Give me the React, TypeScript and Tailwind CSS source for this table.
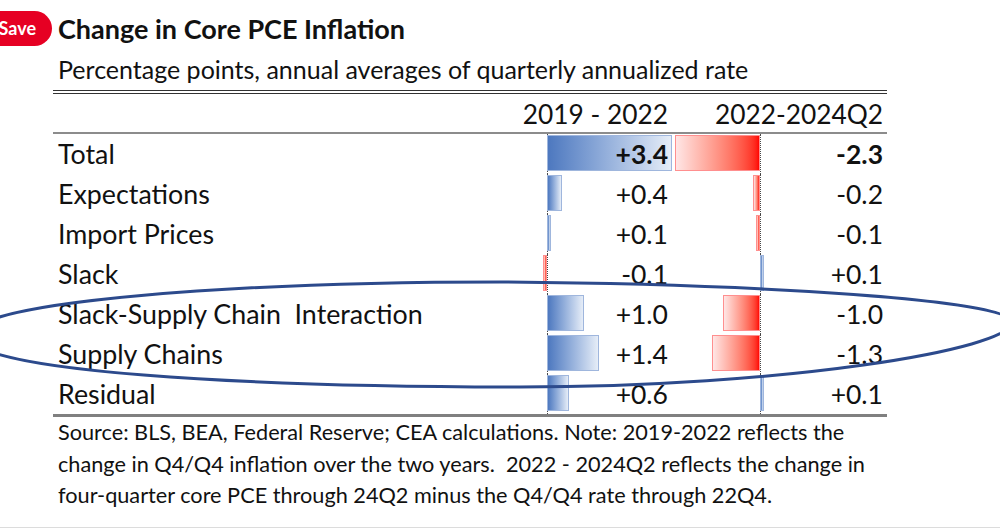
import React from "react";

const rows = [
  { label: "Total", a: 3.4, b: -2.3, bold: true },
  { label: "Expectations", a: 0.4, b: -0.2 },
  { label: "Import Prices", a: 0.1, b: -0.1 },
  { label: "Slack", a: -0.1, b: 0.1 },
  { label: "Slack-Supply Chain  Interaction", a: 1.0, b: -1.0 },
  { label: "Supply Chains", a: 1.4, b: -1.3 },
  { label: "Residual", a: 0.6, b: 0.1 },
];

const SCALE = 36.8;

function fmt(v: number) {
  return (v > 0 ? "+" : "") + v.toFixed(1);
}

function Bar({ value, axis }: { value: number; axis: number }) {
  const w = Math.abs(value) * SCALE;
  const pos = value >= 0;
  return (
    <div
      className={
        pos
          ? "absolute top-[1px] bottom-[3px] border border-[#9fb6dd] bg-linear-to-r from-[#4d78bf] to-[#e6edf7]"
          : "absolute top-[1px] bottom-[3px] border border-[#ff8f8f] bg-linear-to-l from-[#ff0000] to-[#ffe6e6]"
      }
      style={{ left: pos ? axis : axis - w, width: w }}
    />
  );
}

function Cell({ value, axis, bold }: { value: number; axis: number; bold?: boolean }) {
  return (
    <div className="relative h-10 flex items-center justify-end pr-1">
      <div
        className="absolute top-0 bottom-0 border-l border-dotted border-[#4a4a4a]"
        style={{ left: axis }}
      />
      <Bar value={value} axis={axis} />
      <span className={bold ? "relative font-bold whitespace-nowrap" : "relative whitespace-nowrap"}>
        {fmt(value)}
      </span>
    </div>
  );
}

export default function App() {
  return (
    <div className="relative w-[1000px] h-[532px] overflow-hidden bg-white text-[#111] font-['Lato',sans-serif]">
      {/* Pinterest save button */}
      <div className="absolute left-[-24px] top-[11px] h-[35px] w-[76px] rounded-full bg-[#e60023] text-white text-[18px] font-bold flex items-center justify-end pr-[16px]">
        Save
      </div>

      <div className="pt-[13px] pl-[58px] text-[27px] font-bold leading-8">
        Change in Core PCE Inflation
      </div>

      <div className="ml-[53px] w-[834px]">
        <div className="pl-[5px] pt-[9px] pb-[6px] text-[25px] leading-[30px] border-b-4 border-double border-[#333]">
          Percentage points, annual averages of quarterly annualized rate
        </div>

        <div className="grid grid-cols-[490px_129px_215px] text-[26.3px] leading-[30px] border-b-2 border-[#8c8c8c] h-[40px] items-end pb-[3px]">
          <div />
          <div className="flex justify-end pr-1 whitespace-nowrap">2019 - 2022</div>
          <div className="flex justify-end pr-1 whitespace-nowrap">2022-2024Q2</div>
        </div>

        <div className="border-b-[3px] border-[#808080] text-[26.5px] leading-[30px]">
          {rows.map((r) => (
            <div key={r.label} className="grid grid-cols-[490px_129px_215px]">
              <div className="h-10 flex items-center pl-[5px] whitespace-pre text-[26.8px]">{r.label}</div>
              <Cell value={r.a} axis={4} bold={r.bold} />
              <Cell value={r.b} axis={88} bold={r.bold} />
            </div>
          ))}
        </div>

        <div className="pl-[5px] text-[21.7px] leading-[31.5px] whitespace-pre">
          <div>Source: BLS, BEA, Federal Reserve; CEA calculations. Note: 2019-2022 reflects the</div>
          <div>change in Q4/Q4 inflation over the two years.  2022 - 2024Q2 reflects the change in</div>
          <div>four-quarter core PCE through 24Q2 minus the Q4/Q4 rate through 22Q4.</div>
        </div>
      </div>

      <div className="mt-[15px] border-t border-[#dcdcdc]" />

      {/* hand-drawn highlight ring */}
      <svg
        className="absolute inset-0 pointer-events-none"
        width="1000"
        height="532"
        viewBox="0 0 1000 532"
      >
        <path
          d="M -30 336 C -30 300, 250 282, 500 282 C 760 284, 1012 300, 1012 322 C 1012 350, 780 387, 520 387 C 250 387, -30 372, -30 336 Z"
          fill="none"
          stroke="#2c4a8c"
          strokeWidth="3"
        />
      </svg>
    </div>
  );
}
